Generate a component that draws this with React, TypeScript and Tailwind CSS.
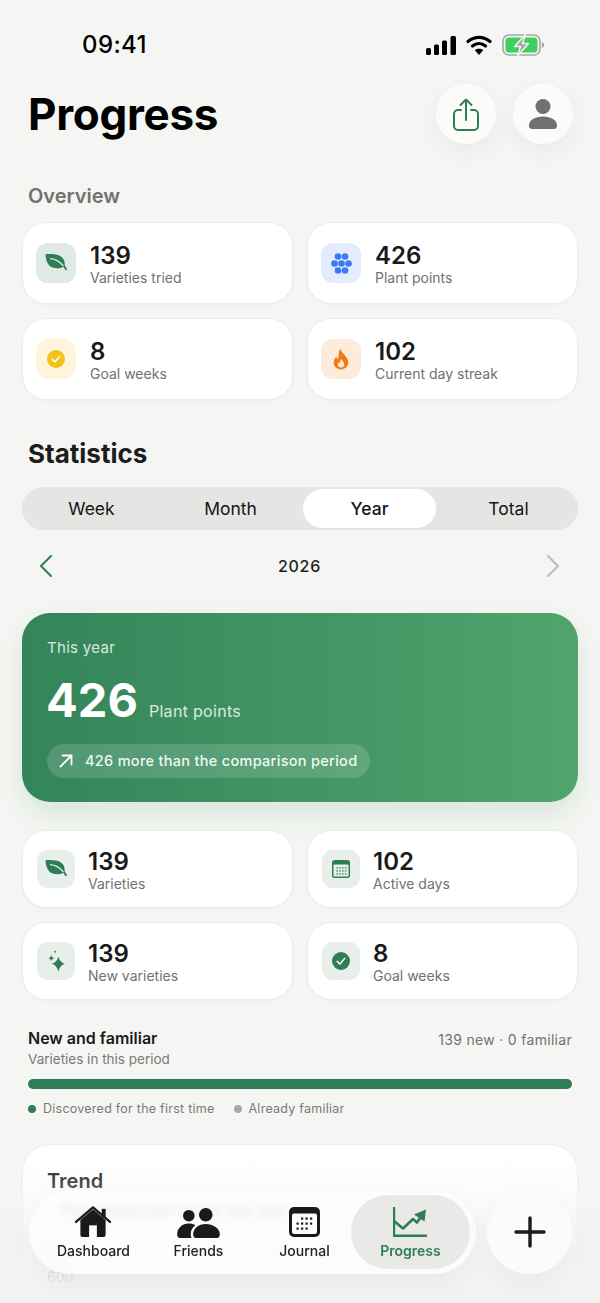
import type { ReactNode } from 'react';

const GREEN = '#2f7d56';

function LeafIcon({ className }: { className?: string }) {
  return (
    <svg viewBox="0 0 24 24" className={className} fill={GREEN}>
      <path d="M1.500 3.200C7 2.600 13 2.800 17 5.400c3 2 4 5.200 3.600 8.600l2.600 4.400-1.600.9-2.300-3.600c-3 1.900-7.600 2.200-11.400.6C4 14.600 1.800 9.500 1.500 3.200Z" />
      <path d="M6.500 7.600c4.500.3 8.500 2.200 12.600 7" fill="none" stroke="#e6f0ea" strokeWidth="1.300" strokeLinecap="round" />
    </svg>
  );
}

function DotsIcon() {
  const dots = [
    [8, 4],
    [16, 4],
    [4, 12],
    [12, 12],
    [20, 12],
    [8, 20],
    [16, 20],
  ];
  return (
    <svg viewBox="0 0 24 24" className="w-[21px] h-[21px]" fill="#3f7bf0">
      {dots.map(([cx, cy]) => (
        <circle key={`${cx}-${cy}`} cx={cx} cy={cy} r="3.800" />
      ))}
    </svg>
  );
}

function CheckCircle({ color, className }: { color: string; className?: string }) {
  return (
    <svg viewBox="0 0 24 24" className={className}>
      <circle cx="12" cy="12" r="12" fill={color} />
      <path d="M7 12.500l3.500 3.500L17 8.500" fill="none" stroke="#fff" strokeWidth="2" strokeLinecap="round" strokeLinejoin="round" />
    </svg>
  );
}

function FlameIcon() {
  return (
    <svg viewBox="0 0 20 26" className="w-[16px] h-[22px]">
      <path d="M9 0c.6 3 2.400 4.500 5 7.500 2.800 3.200 5 6 5 10C19 22.500 15 26 10 26S1 22.500 1 17.500c0-3.200 1.500-5.700 3.500-7.300.2 1.500.8 2.500 1.900 3C7.300 8.500 6.800 4 9 0Z" fill="#f07c14" />
      <path d="M10.300 13c.4 1.800 3.700 3.600 3.700 6.800 0 2.400-1.800 3.900-4 3.900s-4-1.500-4-3.700c0-1.500.7-2.600 1.700-3.300.2.800.5 1.200 1 1.400-.1-1.700.6-3.700 1.600-5.100Z" fill="#fde7d3" />
    </svg>
  );
}

function CalendarSmall() {
  return (
    <svg viewBox="0 0 18 18" className="w-[18px] h-[18px]">
      <rect width="18" height="18" rx="2.500" fill={GREEN} />
      <rect x="1.500" y="4.500" width="15" height="12" rx="1" fill="#e8efeb" />
      {[7, 10, 13].map((y) =>
        [4.5, 7.3, 10.1, 12.9].map((x) => <rect key={`${x}-${y}`} x={x} y={y} width="1.500" height="1.800" fill={GREEN} opacity="0.700" />),
      )}
    </svg>
  );
}

function SparkIcon() {
  return (
    <svg viewBox="0 0 18 24" className="w-[17px] h-[23px]" fill={GREEN}>
      <path d="M11 7Q12.500 13 17.800 14.500 12.500 16 11 23 9.500 16 4.200 14.500 9.500 13 11 7Z" />
      <path d="M3.500 5.500Q4 8 6.500 8.500 4 9 3.500 11.500 3 9 .5 8.500 3 8 3.500 5.500Z" />
      <path d="M7.500 0Q7.800 1.300 9 1.600 7.800 1.900 7.500 3.200 7.200 1.900 6 1.600 7.200 1.300 7.500 0Z" />
    </svg>
  );
}

function StatusIcons() {
  return (
    <div className="flex items-center">
      <svg viewBox="0 0 30 19" className="w-[30px] h-[19px]" fill="#000">
        <rect x="0" y="12" width="5" height="7" rx="1.500" />
        <rect x="8" y="8.500" width="5" height="10.500" rx="1.500" />
        <rect x="16" y="4.500" width="5" height="14.500" rx="1.500" />
        <rect x="24.500" y="0" width="5.500" height="19" rx="1.500" />
      </svg>
      <svg viewBox="0 0 26 20" className="w-[26px] h-[20px] ml-[10px]">
        <path d="M2 6.500C8.500 1 17.500 1 24 6.500" fill="none" stroke="#000" strokeWidth="3.200" strokeLinecap="round" />
        <path d="M6.500 11c4-3.300 9-3.300 13 0" fill="none" stroke="#000" strokeWidth="3.200" strokeLinecap="round" />
        <path d="M13 20l-4.200-4.800c2.400-1.800 6-1.800 8.400 0Z" fill="#000" />
      </svg>
      <svg viewBox="0 0 43 22" className="w-[43px] h-[22px] ml-[10px]">
        <rect x="1" y="1" width="37" height="20" rx="6" fill="none" stroke="#a5a8a4" strokeWidth="1.600" />
        <rect x="3.500" y="3.500" width="32" height="15" rx="3.500" fill="#3fcf5f" />
        <path d="M39.800 8v6c1.600-.4 2.400-1.600 2.400-3s-.8-2.600-2.400-3Z" fill="#a5a8a4" />
        <path d="M23.500 0.500L12.500 12.500h6l-3 9.500 11-12.500h-6Z" fill="#a5a8a4" stroke="#f5f6f3" strokeWidth="1.400" strokeLinejoin="round" />
      </svg>
    </div>
  );
}

function StatCard({ icon, iconBg, value, label, small }: { icon: ReactNode; iconBg: string; value: string; label: string; small?: boolean }) {
  return (
    <div
      className={
        small
          ? 'flex items-center gap-[13px] h-[78px] pl-[14px] rounded-[24px] bg-white border border-[#ececea] shadow-[0_1px_3px_rgba(0,0,0,0.03)]'
          : 'flex items-center gap-[14px] h-[82px] pl-[13px] rounded-[24px] bg-white border border-[#ececea] shadow-[0_1px_3px_rgba(0,0,0,0.03)]'
      }
    >
      <div className={`flex items-center justify-center shrink-0 ${small ? 'w-[38px] h-[38px] rounded-[11px]' : 'w-[40px] h-[40px] rounded-[12px]'} ${iconBg}`}>{icon}</div>
      <div className="flex flex-col pt-[3px]">
        <span className="text-[24px] leading-[28px] font-semibold text-[#1a1a1a]">{value}</span>
        <span className="-mt-[1px] text-[14px] leading-[18px] text-[#6f726f]">{label}</span>
      </div>
    </div>
  );
}

function SectionGrid({ children, className }: { children: ReactNode; className?: string }) {
  return <div className={`grid grid-cols-2 gap-x-[14px] mx-[22px] ${className ?? ''}`}>{children}</div>;
}

function NavItem({ icon, label, active }: { icon: ReactNode; label: string; active?: boolean }) {
  return (
    <div className="flex flex-col items-center justify-center">
      <div className="h-[34px] flex items-end justify-center">{icon}</div>
      <span className={`mt-[4px] text-[14px] leading-[18px] ${active ? 'text-[#2f7d56] font-semibold' : 'text-[#222] font-medium'}`}>{label}</span>
    </div>
  );
}

export default function App() {
  return (
    <div className="relative w-[600px] h-[1303px] overflow-hidden bg-[#f5f6f3] font-['Inter',sans-serif]">
      {/* Status bar */}
      <div className="flex items-center justify-between h-[22px] mt-[34px] pl-[82px] pr-[55px]">
        <span className="text-[24px] leading-[22px] font-medium tracking-[0.4px] text-black">09:41</span>
        <StatusIcons />
      </div>

      {/* Header */}
      <div className="flex items-center justify-between mt-[28px] pl-[28px] pr-[27px]">
        <h1 className="text-[44px] leading-[60px] font-bold tracking-[-0.3px] text-black">Progress</h1>
        <div className="flex gap-[17px]">
          <button className="flex items-center justify-center w-[60px] h-[60px] rounded-full bg-[#fbfcfa] shadow-[0_8px_24px_rgba(0,0,0,0.05)]">
            <svg viewBox="0 0 26 33" className="w-[26px] h-[33px]" fill="none" stroke={GREEN} strokeWidth="2" strokeLinecap="round" strokeLinejoin="round">
              <path d="M8 12H5a4 4 0 0 0-4 4v12a4 4 0 0 0 4 4h16a4 4 0 0 0 4-4V16a4 4 0 0 0-4-4h-3" />
              <path d="M13 22V2M7.500 7L13 1.500 18.500 7" />
            </svg>
          </button>
          <button className="flex items-center justify-center w-[60px] h-[60px] rounded-full bg-[#fbfcfa] shadow-[0_8px_24px_rgba(0,0,0,0.05)]">
            <svg viewBox="0 0 28 30" className="w-[28px] h-[30px]" fill="#6f726e">
              <circle cx="14" cy="7.500" r="7.500" />
              <path d="M0 26.500C0 21 6 17.500 14 17.500S28 21 28 26.500c0 2-1 3.500-3 3.500H3c-2 0-3-1.500-3-3.500Z" />
            </svg>
          </button>
        </div>
      </div>

      {/* Overview */}
      <h2 className="mt-[39px] ml-[28px] text-[20px] leading-[26px] font-semibold text-[#6f726e]">Overview</h2>
      <SectionGrid className="mt-[13px] gap-y-[14px]">
        <StatCard icon={<LeafIcon className="w-[24px] h-[24px]" />} iconBg="bg-[#dfeae4]" value="139" label="Varieties tried" />
        <StatCard icon={<DotsIcon />} iconBg="bg-[#e3ebfd]" value="426" label="Plant points" />
        <StatCard icon={<CheckCircle color="#f3c11b" className="w-[18px] h-[18px]" />} iconBg="bg-[#fdf5dc]" value="8" label="Goal weeks" />
        <StatCard icon={<FlameIcon />} iconBg="bg-[#fdecdc]" value="102" label="Current day streak" />
      </SectionGrid>

      {/* Statistics */}
      <h2 className="mt-[37px] ml-[28px] text-[26px] leading-[34px] font-bold text-[#1c1c1c]">Statistics</h2>
      <div className="grid grid-cols-4 h-[43px] mt-[16px] mx-[22px] py-[2px] rounded-full bg-[#e5e5e4]">
        {['Week', 'Month', 'Year', 'Total'].map((tab) => (
          <div key={tab} className={`flex items-center justify-center pt-[1px] text-[17.5px] text-[#151515] ${tab === 'Year' ? 'mx-[3px] rounded-full bg-white font-medium' : ''}`}>
            {tab}
          </div>
        ))}
      </div>
      <div className="flex items-center justify-between mt-[24px] pl-[40px] pr-[41px] h-[24px]">
        <svg viewBox="0 0 12 22" className="w-[12px] h-[22px]" fill="none" stroke={GREEN} strokeWidth="2" strokeLinecap="round" strokeLinejoin="round">
          <path d="M11 1L1 11l10 10" />
        </svg>
        <span className="text-[16px] font-medium tracking-[0.7px] text-[#222]">2026</span>
        <svg viewBox="0 0 12 22" className="w-[12px] h-[22px]" fill="none" stroke="#bcbdbb" strokeWidth="2" strokeLinecap="round" strokeLinejoin="round">
          <path d="M1 1l10 10L1 21" />
        </svg>
      </div>

      {/* Hero */}
      <div className="mt-[35px] mx-[22px] h-[189px] pl-[25px] pt-[25px] rounded-[28px] bg-gradient-to-r from-[#33855a] to-[#50a46c] shadow-[0_12px_28px_rgba(47,125,86,0.14)]">
        <p className="text-[15px] leading-[20px] tracking-[0.3px] text-white/80">This year</p>
        <div className="flex items-baseline mt-[14px] h-[56px]">
          <span className="-ml-[1px] text-[47px] leading-[56px] font-bold text-white">426</span>
          <span className="ml-[11px] text-[16px] tracking-[0.3px] text-white/80">Plant points</span>
        </div>
        <div className="inline-flex items-center h-[34px] mt-[16px] pl-[12px] pr-[13px] rounded-full bg-white/15">
          <svg viewBox="0 0 14 14" className="w-[14px] h-[14px]" fill="none" stroke="#fff" strokeWidth="1.800" strokeLinecap="round" strokeLinejoin="round">
            <path d="M1.500 12.500L12.500 1.500M3.500 1.500h9v9" />
          </svg>
          <span className="ml-[12px] text-[14.5px] font-medium tracking-[0.3px] text-white/95">426 more than the comparison period</span>
        </div>
      </div>

      {/* Period stats */}
      <SectionGrid className="mt-[28px] gap-y-[14px]">
        <StatCard small icon={<LeafIcon className="w-[24px] h-[24px]" />} iconBg="bg-[#e8efeb]" value="139" label="Varieties" />
        <StatCard small icon={<CalendarSmall />} iconBg="bg-[#e8efeb]" value="102" label="Active days" />
        <StatCard small icon={<SparkIcon />} iconBg="bg-[#e8efeb]" value="139" label="New varieties" />
        <StatCard small icon={<CheckCircle color={GREEN} className="w-[18px] h-[18px]" />} iconBg="bg-[#e8efeb]" value="8" label="Goal weeks" />
      </SectionGrid>

      {/* New and familiar */}
      <div className="mt-[28px] mx-[28px]">
        <div className="flex items-start justify-between">
          <div>
            <h3 className="text-[16px] leading-[20px] font-semibold text-[#1a1a1a]">New and familiar</h3>
            <p className="mt-[2px] text-[13.5px] leading-[18px] text-[#777a77]">Varieties in this period</p>
          </div>
          <span className="pt-[2px] text-[14px] leading-[20px] tracking-[0.3px] text-[#6f726f]">139 new · 0 familiar</span>
        </div>
        <div className="h-[10px] mt-[11px] rounded-full bg-[#2f7d56]" />
        <div className="flex items-center mt-[11px] text-[12.5px] leading-[18px] tracking-[0.25px] text-[#777a77]">
          <span className="w-[8px] h-[8px] rounded-full bg-[#2f7d56]" />
          <span className="ml-[7px]">Discovered for the first time</span>
          <span className="ml-[19px] w-[8px] h-[8px] rounded-full bg-[#a9aaa8]" />
          <span className="ml-[7px]">Already familiar</span>
        </div>
      </div>

      {/* Trend */}
      <div className="mt-[26px] mx-[22px] h-[300px] pl-[24px] pt-[24px] rounded-[28px] bg-white border border-[#ececea]">
        <h3 className="text-[20px] leading-[24px] font-semibold text-[#1a1a1a]">Trend</h3>
        <p className="mt-[8px] ml-[14px] text-[15px] leading-[20px] font-medium text-[#222]">Plant points per month this year</p>
        <div className="w-[33px] h-[17px] mt-[24px] -ml-[7px] rounded-full bg-[#bfe6c8]" />
        <p className="mt-[5px] text-[14px] leading-[20px] text-[#555]">600</p>
      </div>

      {/* Bottom fade */}
      <div className="absolute inset-x-0 bottom-0 h-[150px] bg-gradient-to-b from-[#f4f5f2]/0 via-[#f3f4f1]/85 via-75% to-[#f2f3f0] pointer-events-none" />

      {/* Tab bar */}
      <div className="absolute left-[29px] top-[1190px] w-[447px] h-[84px] flex rounded-full bg-[#fcfdfb]/85 backdrop-blur-[3px] shadow-[0_10px_30px_rgba(0,0,0,0.05)] pl-[12px] py-[5px]">
        <div className="w-[105px] shrink-0 flex justify-center">
          <NavItem
            label="Dashboard"
            icon={
              <svg viewBox="0 0 38 34" className="w-[38px] h-[33px]">
                <path d="M6 15.500L19 4.500l13 11V31a2 2 0 0 1-2 2H8a2 2 0 0 1-2-2Z" fill="#1a1a1a" />
                <path d="M1.500 17.500L19 2.500l17.500 15" fill="none" stroke="#1a1a1a" strokeWidth="2.400" strokeLinecap="round" strokeLinejoin="round" />
                <rect x="28" y="4" width="4" height="9" fill="#1a1a1a" />
                <rect x="15" y="21" width="8" height="12" fill="#fcfdfb" />
              </svg>
            }
          />
        </div>
        <div className="w-[105px] shrink-0 flex justify-center">
          <NavItem
            label="Friends"
            icon={
              <svg viewBox="0 0 44 32" className="w-[43px] h-[31px]" fill="#1a1a1a">
                <circle cx="12" cy="9" r="6" />
                <circle cx="29.500" cy="8" r="7" />
                <path d="M0 28c0-6 5-11 12-11 2.600 0 5 .7 6.800 1.900C15.500 21 14 24.500 14 28c0 1.300.2 2.600.7 4H3c-2 0-3-1.800-3-4Z" />
                <path d="M16.500 28c0-6 5.500-10.500 13-10.500S44 22 44 28c0 2.200-1 4-3 4H19.500c-2 0-3-1.800-3-4Z" />
              </svg>
            }
          />
        </div>
        <div className="w-[105px] shrink-0 flex justify-center pl-[2px]">
          <NavItem
            label="Journal"
            icon={
              <svg viewBox="0 0 31 30" className="w-[31px] h-[30px] mb-[1px]">
                <rect width="31" height="30" rx="5" fill="#1a1a1a" />
                <rect x="3" y="6.500" width="25" height="20.500" rx="2" fill="#fcfdfb" />
                {[10.5, 15.5, 20.5].map((y, row) =>
                  [7.5, 12, 16.5, 21].map((x, col) =>
                    (row === 0 && col < 1) || (row === 2 && col > 2) ? null : <rect key={`${x}-${y}`} x={x} y={y} width="2.200" height="2.200" fill="#1a1a1a" />,
                  ),
                )}
              </svg>
            }
          />
        </div>
        <div className="w-[119px] shrink-0 -ml-[5px] flex items-center justify-center rounded-full bg-[#e9eae7]">
          <NavItem
            active
            label="Progress"
            icon={
              <svg viewBox="0 0 34 30" className="w-[34px] h-[30px] mb-[1px]" fill="none" stroke={GREEN}>
                <path d="M1 0v28.800h33" strokeWidth="2.400" />
                <path d="M1 14l9 7.500 10-9.500 4 3.500 5-7" strokeWidth="2.600" strokeLinejoin="round" />
                <path d="M33 2.500l-1.500 12-10.500-7Z" fill={GREEN} stroke="none" />
              </svg>
            }
          />
        </div>
      </div>
      <button className="absolute left-[487px] top-[1190px] flex items-center justify-center w-[85px] h-[84px] rounded-full bg-[#fbfcfa] shadow-[0_10px_30px_rgba(0,0,0,0.05)]">
        <svg viewBox="0 0 32 32" className="w-[32px] h-[32px]" fill="none" stroke="#1a1a1a" strokeWidth="3.400" strokeLinecap="round">
          <path d="M16 2v28M2 16h28" />
        </svg>
      </button>
    </div>
  );
}
